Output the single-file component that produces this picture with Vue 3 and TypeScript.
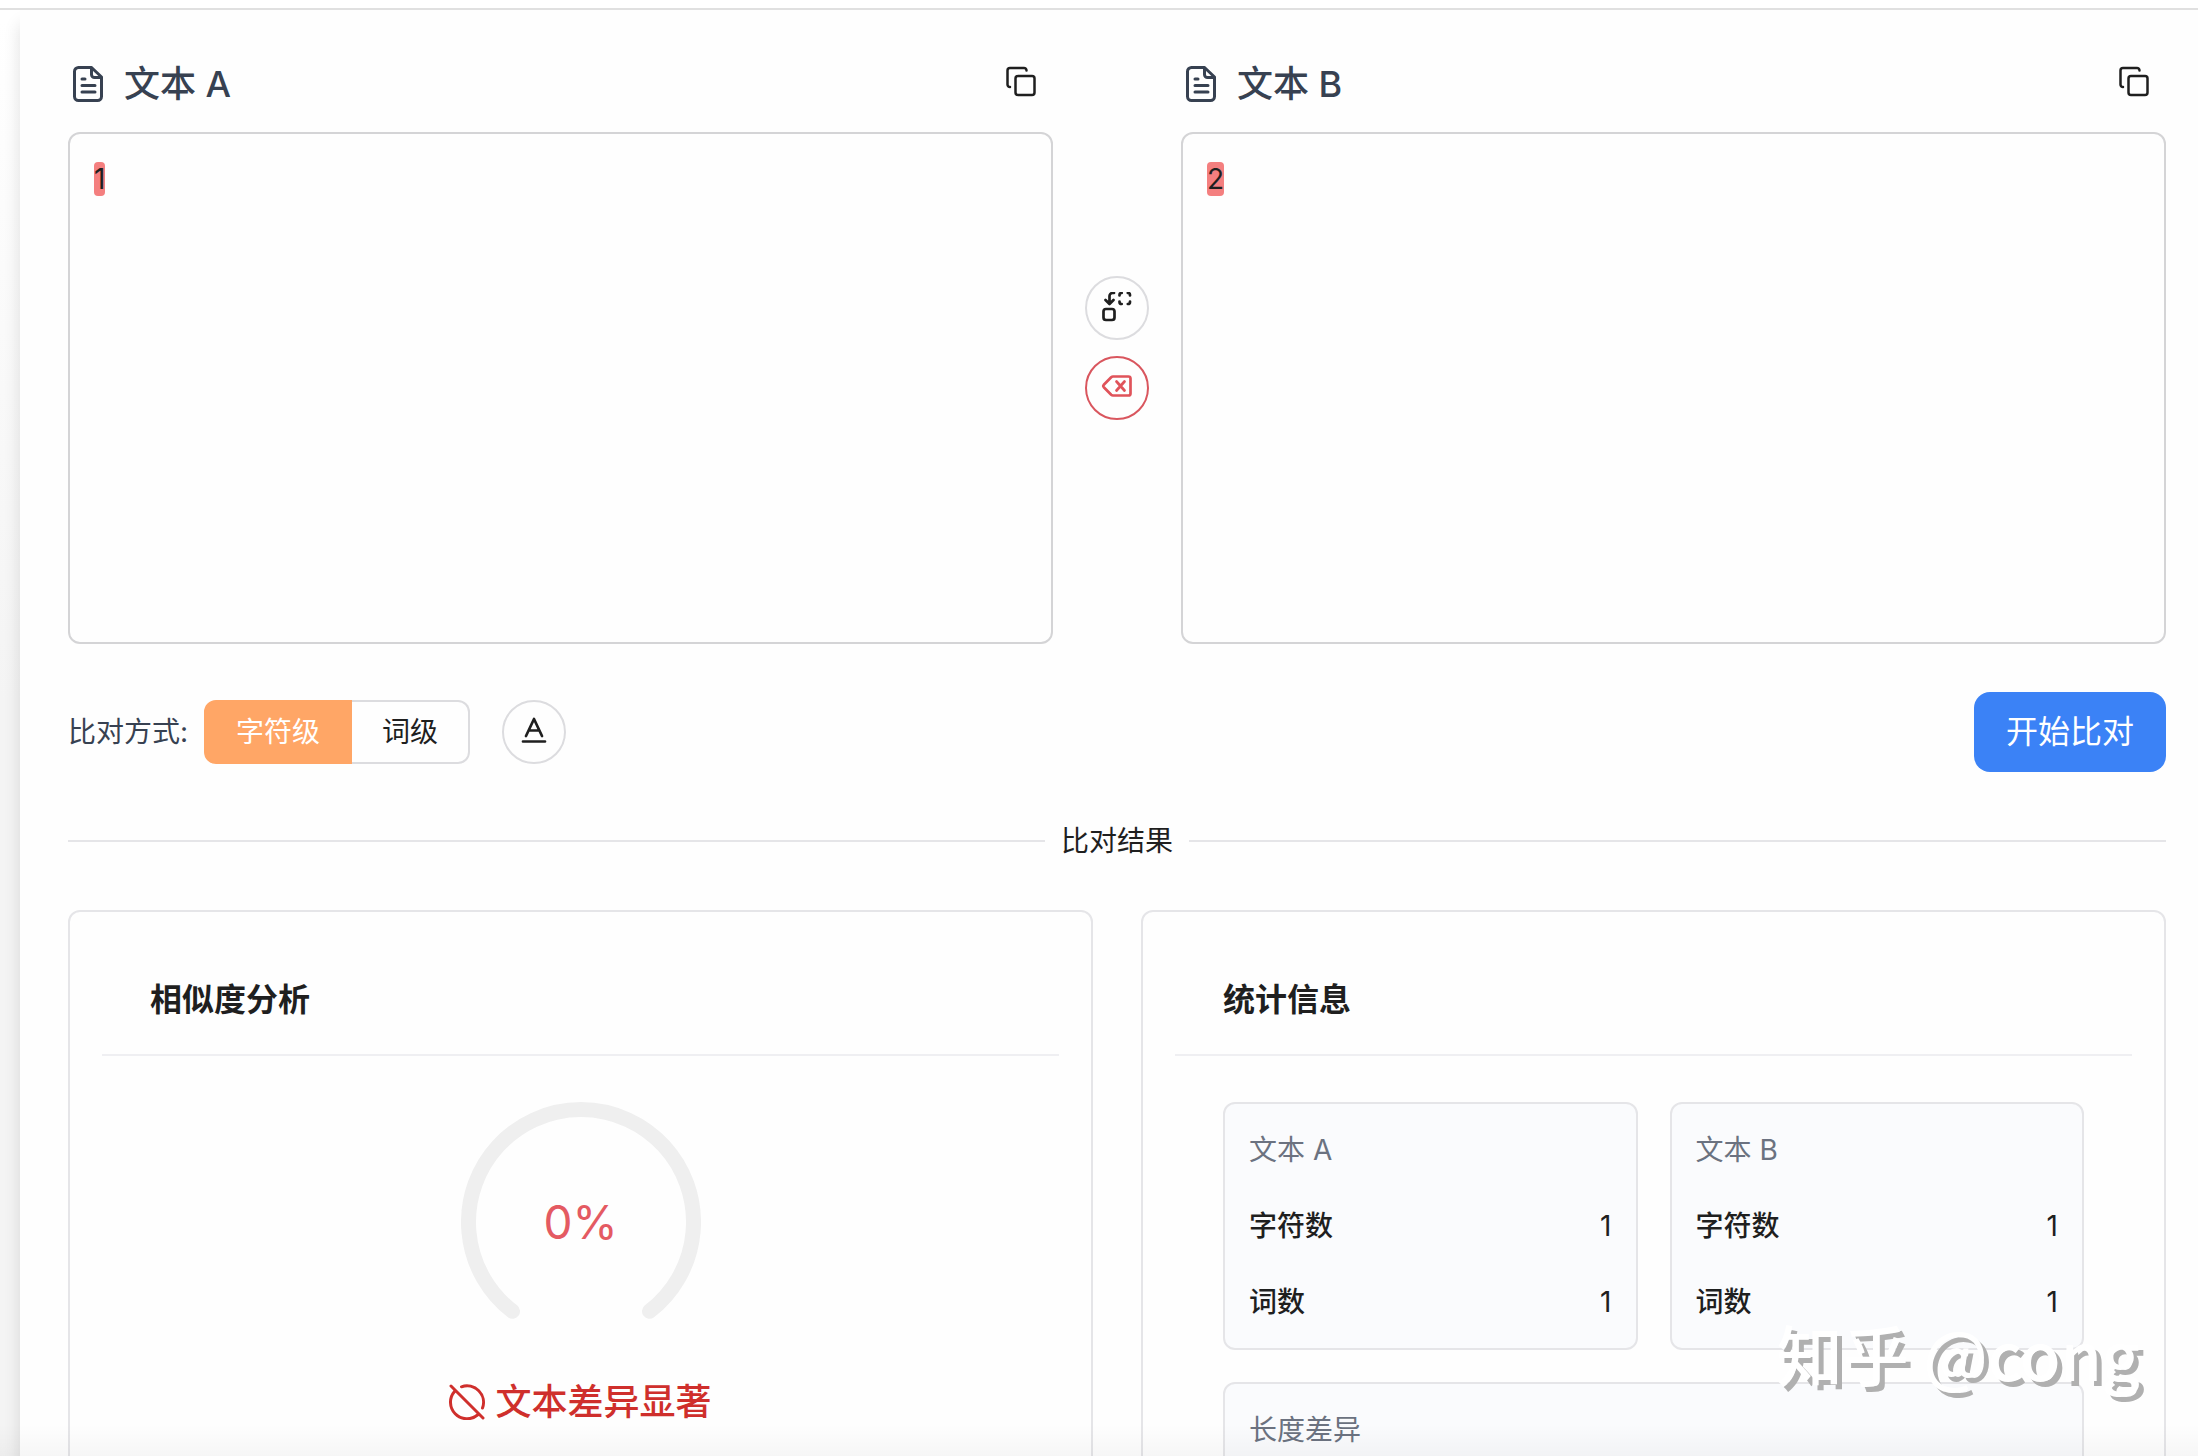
<script setup lang="ts">
import { ref } from 'vue'

type Part = { text: string; changed: boolean }

const panes: { id: string; title: string; parts: Part[]; chars: number; words: number }[] = [
  { id: 'a', title: '文本 A', parts: [{ text: '1', changed: true }], chars: 1, words: 1 },
  { id: 'b', title: '文本 B', parts: [{ text: '2', changed: true }], chars: 1, words: 1 },
]
const modes = [
  { key: 'char', label: '字符级' },
  { key: 'word', label: '词级' },
]
const mode = ref('char')
const similarity = ref(0)
</script>

<template>
  <div class="page">
    <main class="panel">
      <section class="editors">
        <template v-for="(pane, i) in panes" :key="pane.id">
          <div v-if="i === 1" class="actions">
            <button class="round" type="button" aria-label="交换">
              <svg width="32" height="32" viewBox="0 0 32 32" fill="none" stroke="currentColor" stroke-width="2.700" stroke-linecap="round" stroke-linejoin="round">
                <rect x="2.500" y="17" width="11" height="11" rx="2.500" />
                <path d="M13 1h-1.500a3 3 0 0 0-3 3V11.500M4.500 8l4 4 4-4" />
                <path d="M18.500 3.500v-.5a2 2 0 0 1 2-2h.2M26.800 1h.2a2 2 0 0 1 2 2V3.500M29 9.500v.5a2 2 0 0 1-2 2h-.2M20.700 12h-.2a2 2 0 0 1-2-2V9.500" />
              </svg>
            </button>
            <button class="round danger" type="button" aria-label="清空">
              <svg width="32" height="32" viewBox="0 0 32 32" fill="none" stroke="currentColor" stroke-width="2.700" stroke-linecap="round" stroke-linejoin="round">
                <path d="M12 4.500h15.500a2 2 0 0 1 2 2v15a2 2 0 0 1-2 2H12q-1 0-1.800-.7l-7.400-7.600a1.800 1.800 0 0 1 0-2.400l7.400-7.600Q11 4.500 12 4.500z" />
                <path d="M15.500 9.500l8 9M23.500 9.500l-8 9" />
              </svg>
            </button>
          </div>
          <div class="pane">
            <header class="pane-head">
              <h2 class="pane-title">
                <svg width="40" height="40" viewBox="0 0 40 40" fill="none" stroke="currentColor" stroke-width="3" stroke-linecap="round" stroke-linejoin="round">
                  <path d="M10 3.500h13.500L33.500 13v19.500a4 4 0 0 1-4 4H10.500a4 4 0 0 1-4-4V7.500a4 4 0 0 1 4-4z" />
                  <path d="M23.500 4v6.500a3 3 0 0 0 3 3H33M14 15h3M14 21.500h13M14 28h13" />
                </svg>
                {{ pane.title }}
              </h2>
              <button class="copy" type="button" aria-label="复制">
                <svg width="32" height="32" viewBox="0 0 32 32" fill="none" stroke="currentColor" stroke-width="2.500" stroke-linecap="round" stroke-linejoin="round">
                  <rect x="10.500" y="10" width="19" height="19" rx="2.500" />
                  <path d="M5 21a2.500 2.500 0 0 1-2.500-2.500V4.500A2.500 2.500 0 0 1 5 2h14A2.500 2.500 0 0 1 21.500 4.500" />
                </svg>
              </button>
            </header>
            <div class="content">
              <template v-for="(part, n) in pane.parts" :key="n">
                <mark v-if="part.changed">{{ part.text }}</mark>
                <span v-else>{{ part.text }}</span>
              </template>
            </div>
          </div>
        </template>
      </section>

      <section class="toolbar">
        <span id="mode-label" class="mode-label">比对方式:</span>
        <div class="modes" role="group" aria-labelledby="mode-label">
          <button
            v-for="m in modes"
            :key="m.key"
            type="button"
            class="mode"
            :class="{ active: mode === m.key }"
            @click="mode = m.key"
          >{{ m.label }}</button>
        </div>
        <button class="round" type="button" aria-label="区分大小写">
          <svg width="32" height="32" viewBox="0 0 32 32" fill="none" stroke="currentColor" stroke-width="2.700" stroke-linecap="round" stroke-linejoin="round">
            <path d="M8 20L16 3 24 20M11 14.500h10M5 25.500h22" />
          </svg>
        </button>
        <button class="start" type="button">开始比对</button>
      </section>

      <div class="divider"><span>比对结果</span></div>

      <section class="results">
        <article class="card">
          <h3 class="card-title">相似度分析</h3>
          <div class="analysis">
            <div class="gauge">
              <svg width="240" height="240" viewBox="0 0 240 240" fill="none">
                <path d="M51.500 209.300A112.500 112.500 0 1 1 188.500 209.300" stroke="#efefef" stroke-width="15" stroke-linecap="round" />
              </svg>
              <span class="percent">{{ similarity }}%</span>
            </div>
            <p class="verdict">
              <svg width="36" height="36" viewBox="0 0 36 36" fill="none" stroke="currentColor" stroke-width="3" stroke-linecap="round">
                <path d="M2 2l32 32M12.500 2.800A16.500 16.500 0 0 1 33.500 24M5.500 7.500A16.500 16.500 0 0 0 28.500 31" />
              </svg>
              文本差异显著
            </p>
          </div>
        </article>

        <article class="card">
          <h3 class="card-title">统计信息</h3>
          <div class="stats">
            <div v-for="pane in panes" :key="pane.id" class="stat">
              <p class="stat-name">{{ pane.title }}</p>
              <p class="stat-row"><strong>字符数</strong><span>{{ pane.chars }}</span></p>
              <p class="stat-row"><strong>词数</strong><span>{{ pane.words }}</span></p>
            </div>
            <div class="stat wide">
              <p class="stat-name">长度差异</p>
            </div>
          </div>
        </article>
      </section>
    </main>
    <div class="fade"></div>
    <div class="watermark">知乎 @cong</div>
  </div>
</template>

<style>
body {
  overflow: hidden;
}
</style>

<style scoped>
.page {
  position: relative;
  box-sizing: border-box;
  height: 100vh;
  overflow: hidden;
  padding: 8px 0 0 20px;
  background: linear-gradient(#fff 20px, #f4f4f4 700px);
  color: #1f1f1f;
  font: 28px/44px Inter, "Noto Sans CJK SC", sans-serif;
}
.page *,
.page *::before,
.page *::after {
  box-sizing: border-box;
}
.page::before {
  content: "";
  position: absolute;
  top: 8px;
  left: 0;
  right: 0;
  z-index: 1;
  height: 2px;
  background: #e0e0e0;
}
h2, h3, p {
  margin: 0;
}
svg {
  display: block;
  flex: none;
}
button {
  padding: 0;
  border: 0;
  background: none;
  color: inherit;
  font: inherit;
  cursor: pointer;
}
.panel {
  padding: 42px 32px 0 48px;
  background: #fefefe;
  box-shadow: 0 16px 16px rgba(0, 0, 0, 0.12);
}
.editors {
  display: flex;
  gap: 32px;
}
.pane {
  flex: 1;
}
.pane-head {
  display: flex;
  align-items: center;
  justify-content: space-between;
  height: 64px;
  margin-bottom: 18px;
}
.pane-title {
  display: flex;
  align-items: center;
  gap: 16px;
  padding-top: 4px;
  color: #374151;
  font-size: 36px;
  font-weight: 500;
}
.copy {
  display: grid;
  place-items: center;
  width: 64px;
  height: 64px;
}
.content {
  height: 512px;
  padding: 23px 24px;
  border: 2px solid #d4d4d6;
  border-radius: 12px;
}
mark {
  border-radius: 4px;
  background: #f47f7f;
  color: inherit;
}
.actions {
  display: flex;
  flex-direction: column;
  justify-content: center;
  gap: 16px;
  padding-top: 2px;
}
.round {
  display: grid;
  place-items: center;
  width: 64px;
  height: 64px;
  border: 2px solid #dcdcdf;
  border-radius: 50%;
}
.danger {
  border-color: #d9565e;
  color: #e0535a;
}
.toolbar {
  display: flex;
  align-items: center;
  margin-top: 48px;
}
.mode-label {
  margin-right: 16px;
  color: #374151;
}
.modes {
  display: flex;
  margin-right: 32px;
  border-radius: 12px;
}
.mode {
  height: 64px;
  padding: 0 30px;
  border: 2px solid #dcdcdf;
  border-left: 0;
  border-radius: 0 12px 12px 0;
}
.mode:first-child {
  border-radius: 12px 0 0 12px;
  border-left: 2px solid #dcdcdf;
}
.mode.active {
  border-color: #ffa666;
  background: #ffa666;
  color: #fff;
}
.start {
  height: 80px;
  margin-left: auto;
  padding: 0 32px;
  border-radius: 16px;
  background: #3b82f6;
  color: #fff;
  font-size: 32px;
}
.divider {
  display: flex;
  align-items: center;
  gap: 16px;
  margin: 48px 0;
  line-height: 42px;
}
.divider::before,
.divider::after {
  content: "";
  flex: 1;
  height: 2px;
  background: #e5e5e8;
}
.results {
  display: grid;
  grid-template-columns: 1fr 1fr;
  gap: 48px;
}
.card {
  padding: 0 32px 48px;
  border: 2px solid #e5e5e8;
  border-radius: 12px;
}
.card-title {
  padding: 64px 48px 30px;
  border-bottom: 2px solid #efeff2;
  font-size: 32px;
  font-weight: 600;
  line-height: 48px;
}
.analysis {
  display: flex;
  flex-direction: column;
  align-items: center;
  padding-top: 46px;
}
.gauge {
  display: grid;
  place-items: center;
}
.gauge > * {
  grid-area: 1 / 1;
}
.percent {
  color: #e45a62;
  font-size: 46px;
}
.verdict {
  display: flex;
  align-items: center;
  gap: 10px;
  margin-top: 38px;
  color: #cf2f2c;
  font-size: 36px;
  font-weight: 500;
}
.stats {
  display: grid;
  grid-template-columns: 1fr 1fr;
  gap: 32px;
  padding: 46px 48px 0;
}
.stat {
  display: flex;
  flex-direction: column;
  gap: 32px;
  padding: 24px;
  border: 2px solid #e5e5e8;
  border-radius: 12px;
  background: #fafbfd;
}
.wide {
  grid-column: 1 / -1;
  min-height: 172px;
}
.stat-name {
  color: #6b7280;
}
.stat-row {
  display: flex;
  justify-content: space-between;
}
.stat-row strong {
  font-weight: 500;
}
.fade {
  position: absolute;
  right: 0;
  bottom: 0;
  left: 0;
  height: 32px;
  background: linear-gradient(transparent, rgba(0, 0, 0, 0.03));
}
.watermark {
  position: absolute;
  right: 58px;
  bottom: 68px;
  color: #fff;
  font-family: "Noto Sans CJK SC", sans-serif;
  font-size: 66px;
  font-weight: 500;
  line-height: 72px;
  text-shadow: 5px 5px 0 #b0b0b0;
}
</style>
